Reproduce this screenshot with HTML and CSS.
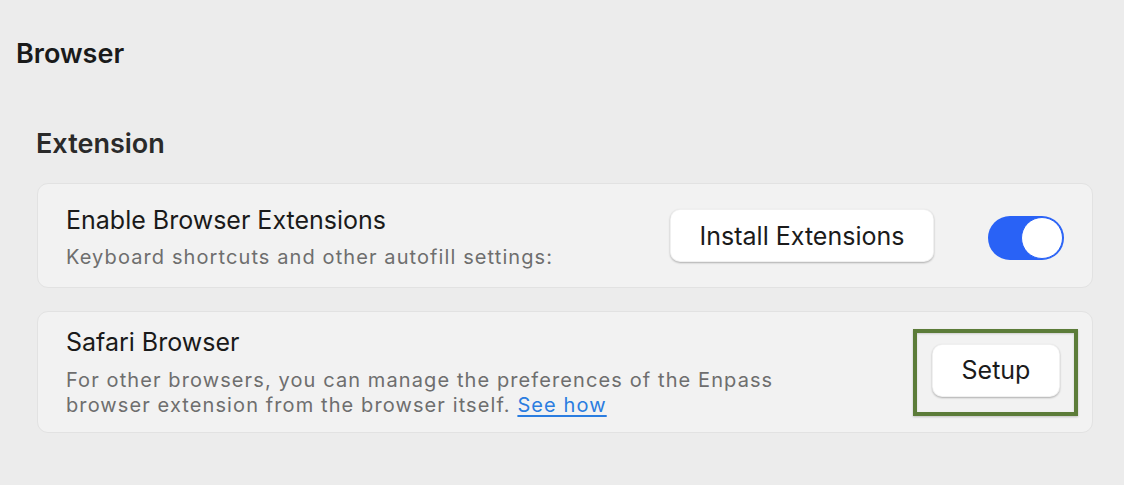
FILE: index.html
```html
<!DOCTYPE html>
<html lang="en">
<head>
<meta charset="utf-8">
<title>Browser</title>
<link rel="stylesheet" href="styles.css">
</head>
<body>
<div class="page">
  <h1 class="page-title">Browser</h1>
  <section class="section">
    <h2 class="section-title">Extension</h2>
    <div class="card card-ext">
      <div class="card-text">
        <div class="card-title">Enable Browser Extensions</div>
        <div class="card-sub">Keyboard shortcuts and other autofill settings:</div>
      </div>
      <div class="card-actions">
        <button class="btn btn-install">Install Extensions</button>
        <span class="toggle"><span class="knob"></span></span>
      </div>
    </div>
    <div class="card card-safari">
      <div class="card-text safari-text">
        <div class="card-title">Safari Browser</div>
        <div class="card-sub wrap">For other browsers, you can manage the preferences of the Enpass browser extension from the browser itself. <a class="link" href="#">See how</a></div>
      </div>
      <div class="highlight">
        <button class="btn btn-setup">Setup</button>
      </div>
    </div>
  </section>
</div>
</body>
</html>
```
FILE: styles.css
```css
html, body {
  margin: 0;
  padding: 0;
  background: #ececec;
}
body {
  font-family: Inter, "Noto Sans", "Liberation Sans", sans-serif;
  color: #1b1b1b;
}
.page {
  padding: 37px 31px 0 16px;
}
.page-title {
  margin: 0;
  font-size: 27px;
  line-height: 34px;
  font-weight: 600;
  color: #1a1a1a;
}
.section {
  padding-left: 20px;
  margin-top: 56px;
}
.section-title {
  margin: 0;
  font-size: 27px;
  line-height: 34px;
  font-weight: 600;
  color: #2a2a2a;
}
.card {
  margin-left: 1px;
  background: #f2f2f2;
  border: 1px solid #e2e2e2;
  border-radius: 11px;
  display: flex;
  align-items: center;
  justify-content: space-between;
}
.card-ext {
  margin-top: 22px;
  padding: 21px 28px 17px 28px;
}
.card-safari {
  margin-top: 23px;
  padding: 0 14px 0 28px;
}
.safari-text {
  padding: 15px 0 14px;
}
.card-title {
  font-size: 25px;
  line-height: 30px;
  color: #1a1a1a;
}
.card-sub {
  margin-top: 10px;
  font-size: 20px;
  line-height: 25px;
  letter-spacing: 1.1px;
  color: #6e6e6e;
}
.card-sub.wrap {
  max-width: 745px;
  margin-top: 11px;
}
.link {
  color: #2b7de0;
  text-decoration: underline;
  text-underline-offset: 3px;
}
.card-actions {
  display: flex;
  align-items: center;
  gap: 54px;
}
.btn {
  font-family: Inter, "Noto Sans", "Liberation Sans", sans-serif;
  font-size: 25px;
  color: #1b1b1b;
  background: #ffffff;
  border: 0.5px solid rgba(0, 0, 0, 0.06);
  border-radius: 10px;
  box-shadow: 0 1px 2px rgba(0, 0, 0, 0.28);
  height: 53px;
  padding: 0;
  cursor: pointer;
}
.btn-install {
  width: 264px;
  margin-bottom: 4px;
}
.btn-setup {
  width: 128px;
}
.toggle {
  display: block;
  width: 76px;
  height: 44px;
  border-radius: 22px;
  background: #2962f6;
  position: relative;
}
.knob {
  position: absolute;
  right: 1px;
  top: 1px;
  width: 40px;
  height: 40px;
  border-radius: 50%;
  background: #ffffff;
  border: 1px solid #2962f6;
}
.highlight {
  border: 4px solid #5c7c39;
  padding: 11px 14px 15px 15px;
  box-shadow: 0 1px 2px rgba(0, 0, 0, 0.2), inset 0 1px 2px rgba(0, 0, 0, 0.15);
}
```
